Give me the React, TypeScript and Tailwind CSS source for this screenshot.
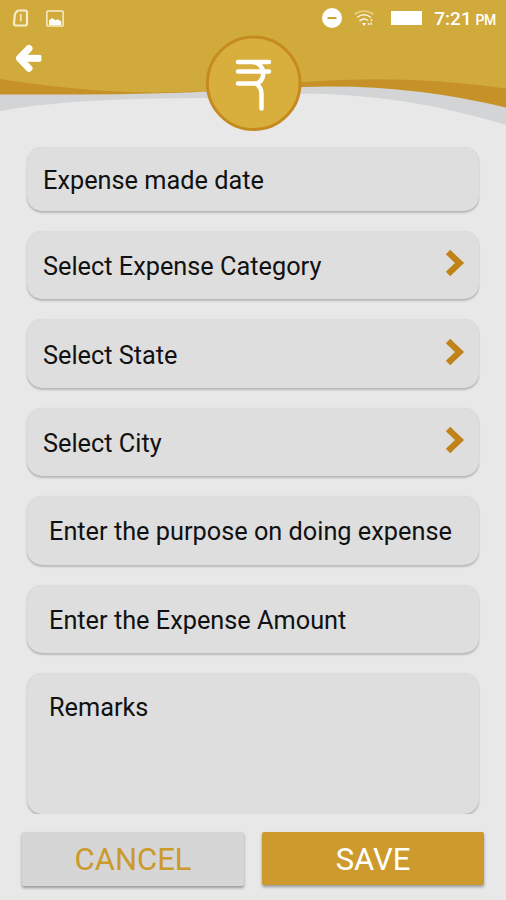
import type { ReactNode } from "react";

function StatusBar() {
  return (
    <div className="relative flex h-9 items-center justify-between pl-3 pr-2.5 text-white">
      <div className="flex items-center gap-[17px]">
        <svg width="17" height="18" viewBox="0 0 17 18" fill="none" stroke="#f7eccb" strokeWidth="2.2">
          <path d="M6.500 1.500H13Q15 1.500 15 3.500V14.500Q15 16.500 13 16.500H4Q2 16.500 2 14.500L2.800 6Q3 4.500 4 3.500Q5.500 1.500 6.500 1.500Z" />
          <path d="M8.800 5V12.500" strokeWidth="2" opacity="0.800" />
        </svg>
        <svg width="18" height="17" viewBox="0 0 18 17" fill="none">
          <rect x="0.900" y="0.900" width="16.200" height="15.200" rx="0.800" stroke="#f7eccb" strokeWidth="1.500" />
          <path d="M3 15V10.500L6 8l3.500 2.300 2.500-1 3.200 2.200V15Z" fill="#fff" />
        </svg>
      </div>

      <div className="flex items-center">
        <svg width="20" height="20" viewBox="0 0 20 20" className="mr-3">
          <circle cx="10" cy="10" r="10" fill="#fff" />
          <path d="M5.500 10h9" stroke="#cba22f" strokeWidth="2" />
        </svg>
        <svg width="20" height="17" viewBox="0 0 20 17" fill="none" strokeWidth="1.500" className="mr-[17px]">
          <path d="M0.500 4.300Q10-2.200 19.500 4.300" stroke="#e9d188" />
          <path d="M3 7.500Q10 2.200 17 7.500" stroke="#fff" opacity="0.850" />
          <path d="M5.500 10.800Q10 7.500 14 10.500" stroke="#fff" opacity="0.900" />
          <path d="M8 13h4l-2 3Z" fill="#fff" />
          <path d="M17.500 9v2M17 12.500v2.500M14.500 13v2" stroke="#fff" opacity="0.800" />
        </svg>
        <div className="mr-3 h-[14px] w-[31px] bg-white" />
        <span className="text-[19px] font-medium leading-none">
          7:21 <span className="-ml-[1px] text-[14px] tracking-[-0.3px]">PM</span>
        </span>
      </div>
    </div>
  );
}

function Header() {
  return (
    <header className="relative h-[146px] shrink-0">
      {/* Layered waves */}
      <svg className="absolute inset-0" width="506" height="146" viewBox="0 0 506 146">
        <path d="M0 0H506V125Q405 94 304 93.500L207 98Q70 98 0 111Z" fill="#d3d4d5" />
        <path d="M0 0H506V107.500Q405 83 302 87Q250 88 207 91.500Q150 95 0 94.500Z" fill="#c69228" />
        <path d="M0 0H506V88.500Q405 74 302 82Q250 88 207 91Q150 94 100 90.500Q50 87 0 79Z" fill="#d1aa3c" />
      </svg>

      <StatusBar />

      <button className="relative ml-[15px] mt-2 block" aria-label="Back">
        <svg width="27" height="29" viewBox="0 0 27 29" fill="none" stroke="#fff" strokeWidth="7" strokeLinecap="round" strokeLinejoin="round">
          <path d="M14 4.500L4.500 14.300L14 24.300" />
          <path d="M6 14.300H24.500" strokeLinecap="butt" />
          <path d="M23 12.300h2v4h-2z" fill="#fff" strokeWidth="2.800" />
        </svg>
      </button>

      {/* Rupee badge */}
      <svg className="absolute left-[205px] top-[35px]" width="98" height="97" viewBox="0 0 98 97" fill="none">
        <circle cx="48.700" cy="48.300" r="46.300" fill="#d8ae3d" stroke="#c58b20" strokeWidth="3" />
        <g stroke="#fff" strokeWidth="4.500" strokeLinecap="round" strokeLinejoin="round">
          <path d="M33 27H64M33 36.500H64M33 48.500H51" />
          <path d="M48 27C61 28 61 47 51 48.500C54 50.500 56.500 54 56.500 59V73.500" />
        </g>
      </svg>
    </header>
  );
}

function Field({ className, children, arrow }: { className: string; children: ReactNode; arrow?: boolean }) {
  return (
    <div
      className={`flex shrink-0 justify-between rounded-[15px] bg-[#dedede] pr-[14px] text-[25.3px] leading-[30px] text-[#111] shadow-[0_2px_2px_rgba(0,0,0,0.2),0_0_1px_rgba(0,0,0,0.15)] ${className}`}
    >
      <span className="whitespace-nowrap">{children}</span>
      {arrow && (
        <svg width="20" height="30" viewBox="0 0 20 30" fill="none" stroke="#bf8318" strokeWidth="6.300" className="-mt-[3px]">
          <path d="M3 3L14.500 14L3 25" />
        </svg>
      )}
    </div>
  );
}

export default function App() {
  return (
    <div className="flex h-[900px] w-[506px] flex-col overflow-hidden bg-[#e8e8e8] font-['Roboto',sans-serif]">
      <Header />

      <main className="flex h-[668px] shrink-0 flex-col gap-5 overflow-hidden px-[27px] pt-px">
        <Field className="h-[63.5px] pl-4 pt-[19px]">Expense made date</Field>
        <Field className="h-[68.6px] pl-4 pt-[21.5px]" arrow>Select Expense Category</Field>
        <Field className="h-[68.6px] pl-4 pt-[21.5px]" arrow>Select State</Field>
        <Field className="h-[68.6px] pl-4 pt-[21.5px]" arrow>Select City</Field>
        <Field className="h-[68.6px] pl-[22px] pt-[21px]">Enter the purpose on doing expense</Field>
        <Field className="h-[68.6px] pl-[22px] pt-[21px]">Enter the Expense Amount</Field>
        <Field className="h-[141px] pl-[22px] pt-[19.5px]">Remarks</Field>
      </main>

      <footer className="flex gap-[18px] px-[22px] pt-[18px] text-[31px] leading-none">
        <button className="h-[54px] flex-1 rounded-[2px] bg-[#d6d6d6] text-[#cb9a2b] shadow-[0_2px_3px_rgba(0,0,0,0.35)]">
          CANCEL
        </button>
        <button className="h-[53px] flex-1 rounded-[2px] bg-[#cd9b2d] pt-[2px] text-white shadow-[0_2px_3px_rgba(0,0,0,0.35)]">
          SAVE
        </button>
      </footer>
    </div>
  );
}
